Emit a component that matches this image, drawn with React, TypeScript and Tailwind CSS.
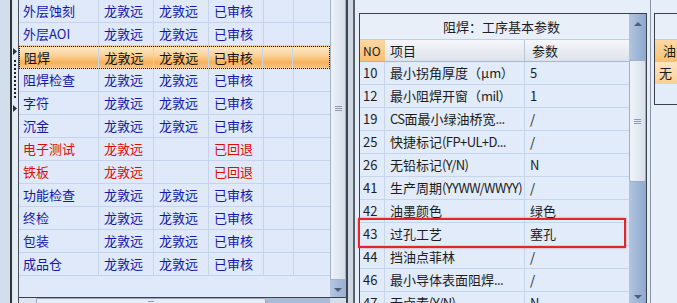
import React from "react";

type LeftRow = { name: string; a: string; b: string; s: string; red?: boolean; active?: boolean };

const leftRows: LeftRow[] = [
  { name: "外层蚀刻", a: "龙敦远", b: "龙敦远", s: "已审核" },
  { name: "外层AOI", a: "龙敦远", b: "龙敦远", s: "已审核" },
  { name: "阻焊", a: "龙敦远", b: "龙敦远", s: "已审核", active: true },
  { name: "阻焊检查", a: "龙敦远", b: "龙敦远", s: "已审核" },
  { name: "字符", a: "龙敦远", b: "龙敦远", s: "已审核" },
  { name: "沉金", a: "龙敦远", b: "龙敦远", s: "已审核" },
  { name: "电子测试", a: "龙敦远", b: "", s: "已回退", red: true },
  { name: "铁板", a: "龙敦远", b: "", s: "已回退", red: true },
  { name: "功能检查", a: "龙敦远", b: "龙敦远", s: "已审核" },
  { name: "终检", a: "龙敦远", b: "龙敦远", s: "已审核" },
  { name: "包装", a: "龙敦远", b: "龙敦远", s: "已审核" },
  { name: "成品仓", a: "龙敦远", b: "龙敦远", s: "已审核" },
];

const params = [
  { no: "10", item: "最小拐角厚度（μm）", val: "5" },
  { no: "12", item: "最小阻焊开窗（mil）", val: "1" },
  { no: "19", item: "CS面最小绿油桥宽...", val: "/" },
  { no: "25", item: "快捷标记(FP+UL+D...", val: "/" },
  { no: "26", item: "无铅标记(Y/N)", val: "N" },
  { no: "41", item: "生产周期(YYWW/WWYY)", val: "/" },
  { no: "42", item: "油墨颜色", val: "绿色" },
  { no: "43", item: "过孔工艺", val: "塞孔" },
  { no: "44", item: "挡油点菲林", val: "/" },
  { no: "46", item: "最小导体表面阻焊...", val: "/" },
  { no: "47", item: "无卤素(Y/N)", val: "N" },
];

// latin runs are tightened a bit so they sit like the half-width glyphs of the original
const Item = ({ text }: { text: string }) => (
  <>
    {text.split(/([\x20-\x7e]+)/).map((part, i) =>
      /^[\x20-\x7e]+$/.test(part) ? (
        <span key={i} className="tracking-[-0.6px]">
          {part}
        </span>
      ) : (
        <span key={i}>{part}</span>
      )
    )}
  </>
);

const RightTri = () => (
  <svg width="4" height="7" viewBox="0 0 4 7">
    <polygon points="0,0 4,3.5 0,7" fill="#2a2f38" />
  </svg>
);

const UpArrow = () => (
  <svg width="8" height="4" viewBox="0 0 8 4">
    <polygon points="0,4 4,0 8,4" fill="#4d5d75" />
  </svg>
);

const DownArrow = () => (
  <svg width="8" height="4" viewBox="0 0 8 4">
    <polygon points="0,0 8,0 4,4" fill="#4d5d75" />
  </svg>
);

const Grip = () => (
  <div className="flex flex-col gap-[1px]">
    <div className="h-[1px] w-[7px] bg-[#8c9bb1]" />
    <div className="h-[1px] w-[7px] bg-[#8c9bb1]" />
    <div className="h-[1px] w-[7px] bg-[#8c9bb1]" />
  </div>
);

function LeftTable() {
  return (
    <div className="w-[311px] shrink-0 bg-[#dfe9f9]">
      {leftRows.map((r) => {
        const color = r.red ? "text-[#e00a0a]" : "text-[#1419a8]";
        return (
          <div
            key={r.name}
            className={
              r.active
                ? "flex h-[23px] items-center border border-dotted border-[#111] bg-[linear-gradient(to_bottom,#fde8c4,#fbd298_40%,#f6b05a_75%,#f9c888)] text-[#111]"
                : `flex h-[23px] items-center border-b border-[#c6d4ea] ${color}`
            }
          >
            <div className="h-full w-[80px] border-r border-[#c6d4ea] pl-[4px] leading-[22px]">{r.name}</div>
            <div className="h-full w-[55px] border-r border-[#c6d4ea] pl-[5px] leading-[22px]">{r.a}</div>
            <div className="h-full w-[55px] border-r border-[#c6d4ea] pl-[5px] leading-[22px]">{r.b}</div>
            <div className="h-full w-[55px] border-r border-[#c6d4ea] pl-[5px] leading-[22px]">{r.s}</div>
            <div className="h-full w-[30px] border-r border-[#c6d4ea]" />
            <div className="h-full w-[36px]" />
          </div>
        );
      })}
    </div>
  );
}

function LeftVScroll() {
  return (
    <div className="flex w-[16px] shrink-0 flex-col bg-[#a9bedc]">
      <div className="flex h-[280px] flex-col items-center rounded-b-[2px] border-x border-b border-[#a3b2c7] bg-[linear-gradient(to_right,#eef2f8,#d5deea)] pt-[106px]">
        <Grip />
      </div>
      <div className="flex flex-1 items-center justify-center bg-[linear-gradient(to_right,#b4c6e0,#98b0d4)] pt-[3px]">
        <DownArrow />
      </div>
    </div>
  );
}

function HScroll() {
  return (
    <div className="flex h-[6px] shrink-0 border-t border-[#3a404c] bg-[#c3d1e4]">
      <div className="w-[17px] bg-[#dbe4f0]" />
      <div className="flex w-[230px] justify-center rounded-t-[2px] border-x border-t border-[#97a7bd] bg-[#e6edf6] pt-[2px]">
        <div className="h-[3px] w-[6px] border-y border-[#8c9bb1]" />
      </div>
      <div className="flex-1 bg-[#a8bcd8]" />
      <div className="w-[16px] bg-[#d3deed]" />
    </div>
  );
}

function RightScroll() {
  return (
    <div className="flex w-[17px] shrink-0 flex-col bg-[linear-gradient(to_right,#b2c5df,#8ea8cf)]">
      <div className="flex h-[20px] items-center justify-center">
        <UpArrow />
      </div>
      <div className="h-[26px]" />
      <div className="flex h-[122px] items-center justify-center rounded-[2px] border border-[#a0afc5] bg-[linear-gradient(to_right,#f0f4f9,#d8e0eb)]">
        <Grip />
      </div>
      <div className="flex-1" />
      <div className="flex h-[20px] items-center justify-center">
        <DownArrow />
      </div>
    </div>
  );
}

function ParamBox() {
  return (
    <div className="relative flex h-[295px] w-[288px] border border-[#3a414d] text-[#1d1d1d]">
      <div className="flex w-[269px] shrink-0 flex-col bg-[#e1ebfa]">
        <div className="flex h-[26px] shrink-0 items-center justify-center border-b border-[#c2cedf] bg-[#e9eff8] pl-[14px]">
          阻焊：工序基本参数
        </div>
        <div className="flex h-[22px] shrink-0 border-b border-[#a9b6c8] bg-[linear-gradient(to_bottom,#f5f7fa,#dde3ec)]">
          <div className="flex w-[25px] items-center bg-[linear-gradient(to_bottom,#fbd9a4,#f7c074)] pl-[3px] text-[12px] leading-[22px]">NO</div>
          <div className="w-[140px] border-r border-[#bcc7d6] pl-[5px] leading-[21px]">项目</div>
          <div className="w-[104px] pl-[7px] leading-[21px]">参数</div>
        </div>
        {params.map((p) => (
          <div key={p.no} className="flex h-[23px] shrink-0 border-b border-[#c6d5ea]">
            <div className="w-[25px] border-r border-[#c6d5ea] pl-[3px] leading-[22px]">{p.no}</div>
            <div className="w-[140px] overflow-hidden whitespace-nowrap border-r border-[#c6d5ea] pl-[5px] leading-[22px]">
              <Item text={p.item} />
            </div>
            <div className="w-[104px] pl-[5px] leading-[22px]">{p.val}</div>
          </div>
        ))}
      </div>
      <RightScroll />
      <div className="absolute left-[-2px] top-[204px] h-[30px] w-[268px] border-2 border-[#e0282c] shadow-[0_0_2px_rgba(200,0,0,0.45)]" />
    </div>
  );
}

export default function App() {
  return (
    <div className="flex h-[303px] w-[677px] overflow-hidden bg-[#d5e0ef] font-['Noto_Sans_CJK_SC',sans-serif] text-[13px]">
      {/* left edge and splitter */}
      <div className="w-[10px] shrink-0 bg-[#d3deed]" />
      <div className="w-[2px] shrink-0 bg-[#30343c]" />
      <div className="flex w-[6px] shrink-0 flex-col items-center bg-[#e4ecf6] pt-[48px]">
        <RightTri />
        <div className="mt-[5px] h-[38px] border-l-2 border-dotted border-[#222]" />
        <div className="mt-[7px] flex">
          <RightTri />
        </div>
      </div>
      <div className="w-[1px] shrink-0 bg-[#4b5260]" />

      {/* left grid */}
      <div className="flex w-[327px] shrink-0 flex-col">
        <div className="flex min-h-0 flex-1">
          <LeftTable />
          <LeftVScroll />
        </div>
        <HScroll />
      </div>

      <div className="w-[2px] shrink-0 bg-[#3e434c]" />
      <div className="w-[5px] shrink-0 bg-[#cdd7e4]" />
      <div className="w-[2px] shrink-0 bg-[#5a606a]" />

      {/* parameter panel */}
      <div className="w-[295px] shrink-0 bg-[#e6eef9] pl-[4px] pt-[13px]">
        <ParamBox />
      </div>

      <div className="w-[1px] shrink-0 bg-[#8a95a5]" />

      {/* third panel */}
      <div className="w-[26px] shrink-0 bg-[#e6eef9] pl-[3px] pt-[13px]">
        <div className="flex h-[92px] w-[40px] flex-col border border-[#3a414d] bg-[#e3ecf9] text-[#1d1d1d]">
          <div className="h-[26px] shrink-0 border-b border-[#c2cedf] bg-[#e9eff8]" />
          <div className="h-[22px] shrink-0 bg-[linear-gradient(to_bottom,#fbd9a4,#f7c074)] pl-[8px] leading-[22px]">油</div>
          <div className="h-[22px] shrink-0 bg-[linear-gradient(to_bottom,#fde6c2,#f9cf92)] pl-[4px] leading-[22px]">无</div>
        </div>
      </div>
    </div>
  );
}
